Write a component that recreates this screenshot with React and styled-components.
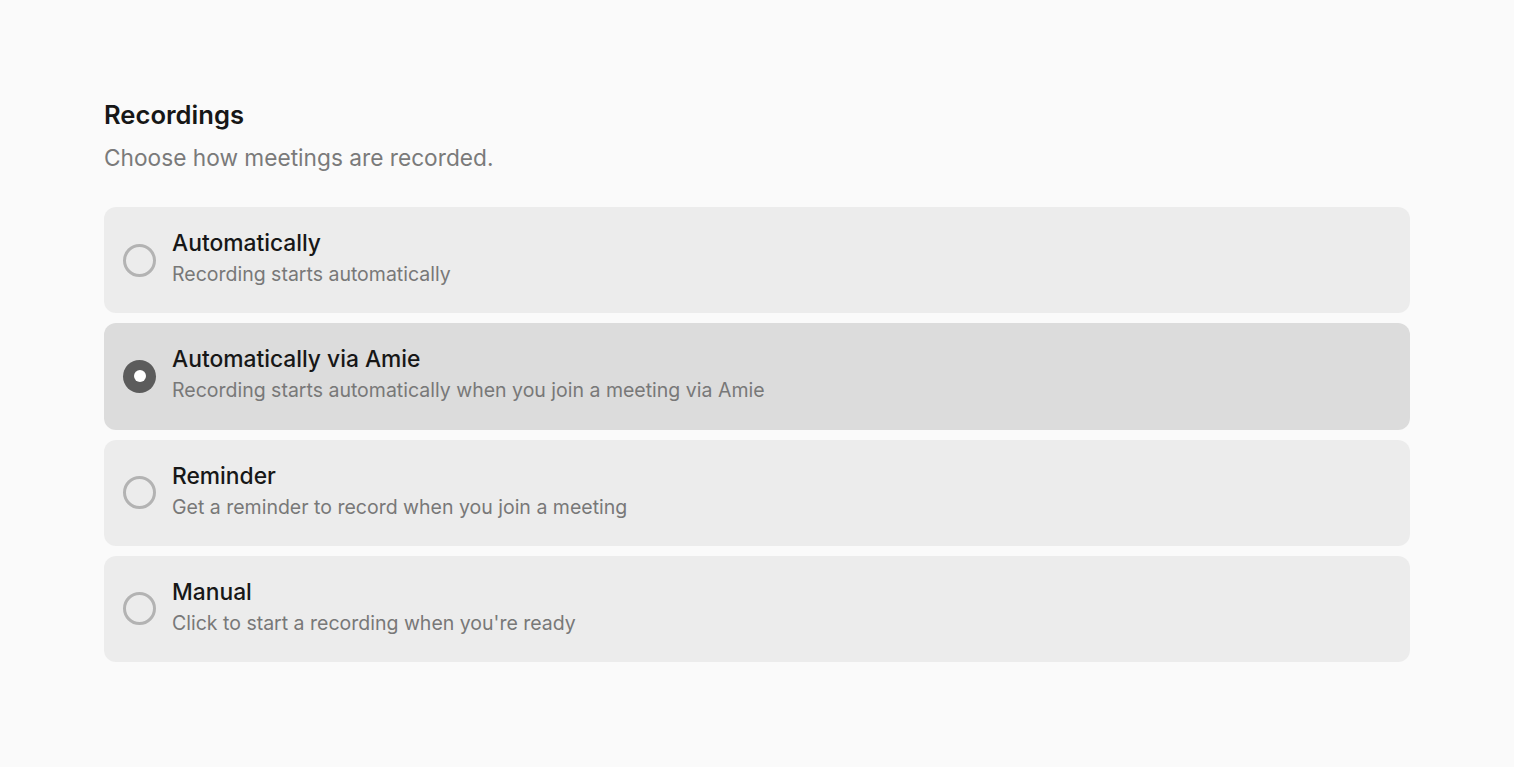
import { useState } from 'react';
import styled, { createGlobalStyle } from 'styled-components';

const GlobalStyle = createGlobalStyle`
    html, body {
        margin: 0;
        padding: 0;
        background: #fafafa;
    }
    body {
        font-family: Inter, 'Noto Sans', 'Liberation Sans', sans-serif;
        -webkit-font-smoothing: antialiased;
    }
`;

const Page = styled.div`
    min-height: 767px;
    box-sizing: border-box;
    padding: 99px 104px 0;
`;

const Title = styled.h2`
    margin: 0;
    font-size: 25.6px;
    line-height: 32px;
    font-weight: 600;
    color: #171717;
`;

const Subtitle = styled.p`
    margin: 12px 0 0;
    font-size: 22.7px;
    line-height: 30px;
    color: #7a7a7a;
`;

const OptionList = styled.div`
    display: flex;
    flex-direction: column;
    gap: 10px;
    margin-top: 34px;
`;

const OptionCard = styled.label`
    display: flex;
    align-items: center;
    gap: 16px;
    height: 106.25px;
    box-sizing: border-box;
    padding: 0 19px;
    border-radius: 12px;
    background: ${({ $active }) => ($active ? '#dcdcdc' : '#ececec')};
    cursor: pointer;
`;

const Radio = styled.span`
    flex: none;
    width: 33px;
    height: 33px;
    box-sizing: border-box;
    border-radius: 50%;
    display: flex;
    align-items: center;
    justify-content: center;
    border: ${({ $checked }) => ($checked ? 'none' : '3px solid #b3b3b3')};
    background: ${({ $checked }) => ($checked ? '#5c5c5c' : 'transparent')};
    &::after {
        content: '';
        display: ${({ $checked }) => ($checked ? 'block' : 'none')};
        width: 12px;
        height: 12px;
        border-radius: 50%;
        background: #ffffff;
    }
`;

const OptionText = styled.div`
    display: flex;
    flex-direction: column;
    margin-top: -4px;
`;

const OptionName = styled.span`
    font-size: 22.8px;
    line-height: 28px;
    font-weight: 500;
    color: #171717;
`;

const OptionDesc = styled.span`
    margin-top: 4px;
    font-size: 19.5px;
    line-height: 26px;
    color: #787878;
`;

const options = [
    { key: 'auto', name: 'Automatically', desc: 'Recording starts automatically' },
    {
        key: 'amie',
        name: 'Automatically via Amie',
        desc: 'Recording starts automatically when you join a meeting via Amie',
    },
    { key: 'reminder', name: 'Reminder', desc: 'Get a reminder to record when you join a meeting' },
    { key: 'manual', name: 'Manual', desc: "Click to start a recording when you're ready" },
];

const App = () => {
    const [selected, setSelected] = useState('amie');

    return (
        <>
            <GlobalStyle />
            <Page>
                <Title>Recordings</Title>
                <Subtitle>Choose how meetings are recorded.</Subtitle>
                <OptionList>
                    {options.map((opt) => {
                        const active = opt.key === selected;
                        return (
                            <OptionCard
                                key={opt.key}
                                $active={active}
                                onClick={() => setSelected(opt.key)}
                            >
                                <Radio $checked={active} />
                                <OptionText>
                                    <OptionName>{opt.name}</OptionName>
                                    <OptionDesc>{opt.desc}</OptionDesc>
                                </OptionText>
                            </OptionCard>
                        );
                    })}
                </OptionList>
            </Page>
        </>
    );
};

export default App;
